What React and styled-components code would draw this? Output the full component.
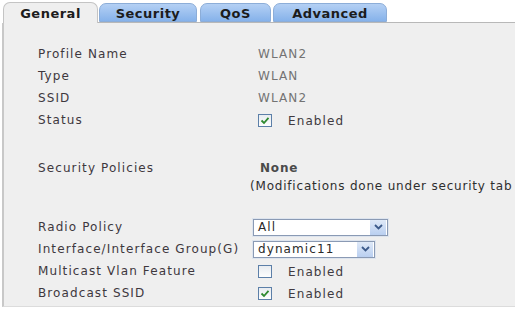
import styled, { createGlobalStyle } from "styled-components";

const Global = createGlobalStyle`
  html, body { margin: 0; padding: 0; background: #fff; }
  body { width: 515px; height: 312px; overflow: hidden; font-family: "DejaVu Sans", Verdana, sans-serif; }
`;

const Page = styled.div`
  padding: 2px 0 0 2px;
`;

const TabBar = styled.div`
  display: flex;
  align-items: flex-end;
  height: 20px;
  border-bottom: 1px solid #b8b8b8;
  margin-left: 1px;
`;

const Tab = styled.div`
  box-sizing: border-box;
  width: ${p => p.w}px;
  height: ${p => (p.active ? 21 : 19)}px;
  margin-bottom: ${p => (p.active ? -1 : 0)}px;
  margin-left: ${p => p.ml || 0}px;
  border: 1px solid ${p => (p.active ? "#c4c4c4" : "#8cadd8")};
  border-bottom: ${p => (p.active ? "none" : "1px solid #8cadd8")};
  border-radius: 7px 7px 0 0;
  background: ${p => (p.active ? "#efefef" : "linear-gradient(#b4d0f4, #86b2ea)")};
  font-weight: bold;
  font-size: 13px;
  letter-spacing: 0.5px;
  color: #1c1c1c;
  display: flex;
  align-items: center;
  justify-content: center;
  padding-top: ${p => (p.active ? 0 : 1)}px;
`;

const Panel = styled.div`
  background: #efefef;
  border-left: 2px solid #c8c8c8;
  border-bottom: 1px solid #dcdcdc;
  padding: 20px 0 2px 34px;
`;

const Row = styled.div`
  display: grid;
  grid-template-columns: 220px 1fr;
  align-items: center;
  min-height: ${p => p.h || 22}px;
  font-size: 12px;
  letter-spacing: 1.1px;
`;

const Spacer = styled.div`
  height: ${p => p.h}px;
`;

const Label = styled.div`
  color: #3e383e;
  white-space: nowrap;
  align-self: ${p => (p.top ? "start" : "center")};
  padding-top: ${p => (p.top ? 4 : 0)}px;
`;

const Value = styled.div`
  color: #737373;
  display: flex;
  align-items: center;
  margin-left: ${p => p.ml || 0}px;
`;

const Policy = styled.div`
  color: #2e2e2e;
  line-height: 18px;
  white-space: nowrap;
  letter-spacing: 0.8px;
`;

const Bold = styled.div`
  font-weight: bold;
  color: #4a4a4a;
  padding-left: 10px;
`;

const Box = styled.span`
  box-sizing: border-box;
  width: 14px;
  height: 13px;
  border: 1px solid #5c7fa8;
  background: linear-gradient(#e8ecf0, #fdfdfd);
  display: inline-flex;
  align-items: center;
  justify-content: center;
`;

const CheckText = styled.span`
  color: #403a40;
  margin-left: 16px;
  padding-top: 2px;
`;

const Select = styled.div`
  box-sizing: border-box;
  width: ${p => p.w}px;
  height: 17px;
  border: 1px solid #8a9ab4;
  background: #fff;
  display: flex;
  align-items: center;
  justify-content: space-between;
  padding-left: 4px;
  color: #2a2a2a;
  box-shadow: 0 0 0 1px #dde4ee;
`;

const Arrow = styled.span`
  width: 16px;
  height: 15px;
  background: linear-gradient(#dfe9f8, #b9cff0);
  display: flex;
  align-items: center;
  justify-content: center;
  margin-right: 1px;
`;

const Check = ({ on }) => (
  <Value>
    <Box>
      {on && (
        <svg width="10" height="9" viewBox="0 0 10 9">
          <path d="M1.5 4.5 L4 7 L8.5 1.8" fill="none" stroke="#2f8a2f" strokeWidth="1.8" />
        </svg>
      )}
    </Box>
    <CheckText>Enabled</CheckText>
  </Value>
);

const Dropdown = ({ w, children }) => (
  <Value ml={-5}>
    <Select w={w}>
      <span>{children}</span>
      <Arrow>
        <svg width="9" height="6" viewBox="0 0 9 6">
          <path d="M1 1 L4.5 4.5 L8 1" fill="none" stroke="#3c5a8a" strokeWidth="1.8" />
        </svg>
      </Arrow>
    </Select>
  </Value>
);

export default function App() {
  return (
    <Page>
      <Global />
      <TabBar>
        <Tab active w={95}>General</Tab>
        <Tab w={98} ml={1}>Security</Tab>
        <Tab w={71} ml={3}>QoS</Tab>
        <Tab w={114} ml={2}>Advanced</Tab>
      </TabBar>
      <Panel>
        <Row><Label>Profile Name</Label><Value>WLAN2</Value></Row>
        <Row><Label>Type</Label><Value>WLAN</Value></Row>
        <Row><Label>SSID</Label><Value>WLAN2</Value></Row>
        <Row><Label>Status</Label><Check on /></Row>
        <Spacer h={26} />
        <Row h={40}>
          <Label top>Security Policies</Label>
          <Value ml={-8}>
            <Policy>
              <Bold>None</Bold>
              (Modifications done under security tab
            </Policy>
          </Value>
        </Row>
        <Spacer h={19} />
        <Row><Label>Radio Policy</Label><Dropdown w={135}>All</Dropdown></Row>
        <Row><Label>Interface/Interface Group(G)</Label><Dropdown w={122}>dynamic11</Dropdown></Row>
        <Row><Label>Multicast Vlan Feature</Label><Check /></Row>
        <Row><Label>Broadcast SSID</Label><Check on /></Row>
      </Panel>
    </Page>
  );
}
